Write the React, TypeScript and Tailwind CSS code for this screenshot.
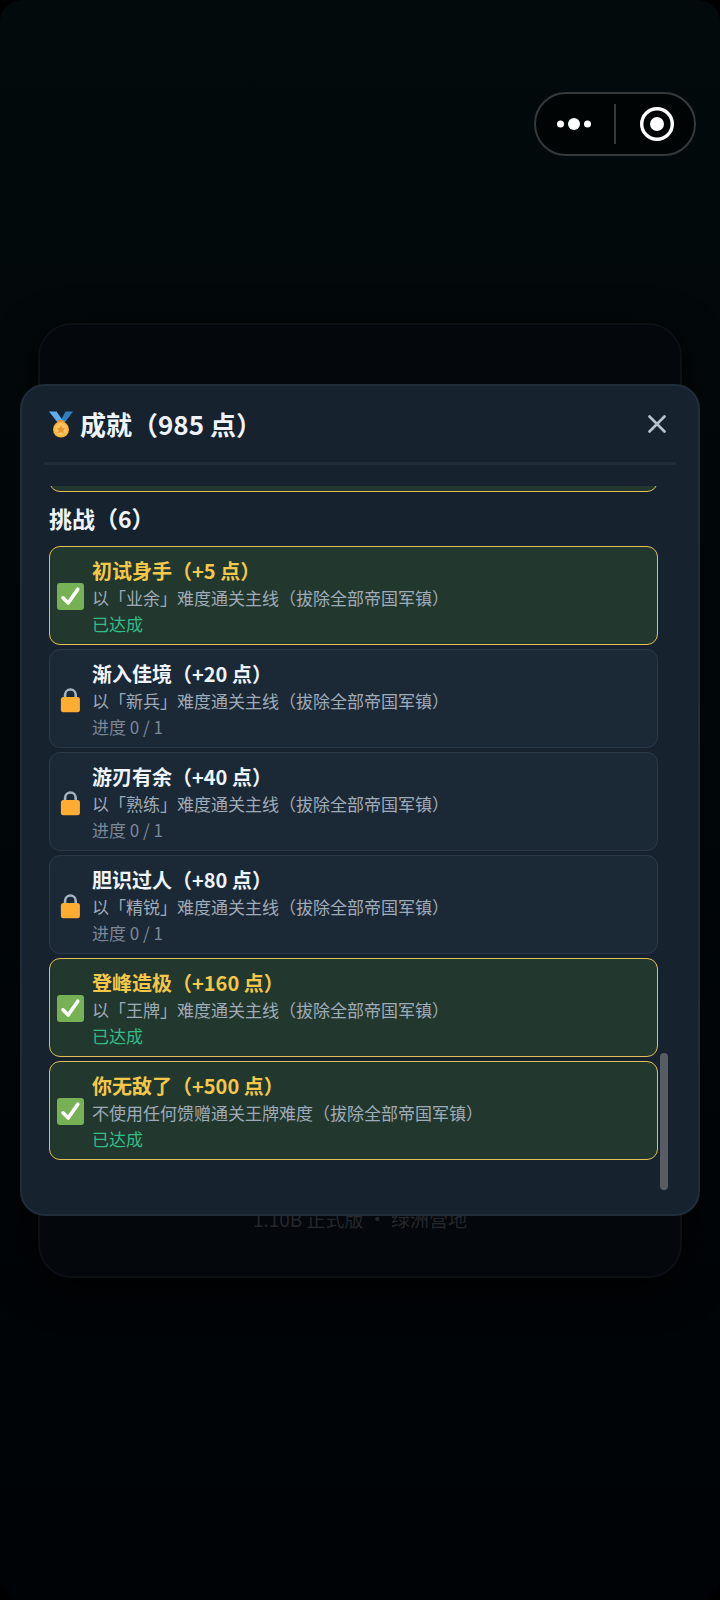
import clsx from 'clsx';

interface Achievement {
  name: string;
  points: number;
  description: string;
  done: boolean;
}

const challenges: Achievement[] = [
  { name: '初试身手', points: 5, description: '以「业余」难度通关主线（拔除全部帝国军镇）', done: true },
  { name: '渐入佳境', points: 20, description: '以「新兵」难度通关主线（拔除全部帝国军镇）', done: false },
  { name: '游刃有余', points: 40, description: '以「熟练」难度通关主线（拔除全部帝国军镇）', done: false },
  { name: '胆识过人', points: 80, description: '以「精锐」难度通关主线（拔除全部帝国军镇）', done: false },
  { name: '登峰造极', points: 160, description: '以「王牌」难度通关主线（拔除全部帝国军镇）', done: true },
  { name: '你无敌了', points: 500, description: '不使用任何馈赠通关王牌难度（拔除全部帝国军镇）', done: true },
];

function MedalIcon() {
  return (
    <svg className="h-7 w-6 shrink-0" viewBox="0 0 24 28" aria-hidden="true">
      <path d="M16.5 1.500H24L15.500 13h-5z" fill="#2f7fc1" />
      <path d="M0 1.500h7.500l8 11.500h-6.500z" fill="#5fadec" />
      <rect x="8.500" y="10" width="7" height="3" rx="1" fill="#d98b35" />
      <circle cx="12" cy="19.500" r="8" fill="#fbb13c" />
      <circle cx="12" cy="19.500" r="6.200" fill="#fcc35c" />
      <path
        d="M12 15.100l1.300 2.800 3 .4-2.200 2.100.6 3-2.700-1.500-2.700 1.500.6-3-2.200-2.100 3-.4z"
        fill="#e8952f"
      />
    </svg>
  );
}

function CheckIcon() {
  return (
    <svg className="size-[27px] shrink-0" viewBox="0 0 27 27" aria-hidden="true">
      <rect width="27" height="27" rx="3" fill="#76b255" />
      <path
        d="M6 14.800l5.200 5.200L20.800 6.200"
        fill="none"
        stroke="#fff"
        strokeWidth="3.600"
        strokeLinecap="round"
        strokeLinejoin="round"
      />
    </svg>
  );
}

function LockIcon() {
  return (
    <svg className="size-[27px] shrink-0" viewBox="0 0 27 27" aria-hidden="true">
      <path
        d="M8.100 13V8.800a5.300 5.300 0 0 1 10.600 0V13"
        fill="none"
        stroke="#a5b2bf"
        strokeWidth="2.600"
      />
      <rect x="3.900" y="11" width="19" height="15.300" rx="2.500" fill="#ffac33" />
    </svg>
  );
}

function AchievementCard({ item }: { item: Achievement }) {
  return (
    <li
      className={clsx(
        'flex items-center gap-2 rounded-[11px] border px-[7px] pt-[10px] pb-2',
        item.done ? 'border-[#e0c158] bg-[#22382f]' : 'border-[#2a3949] bg-[#1b2937]',
      )}
    >
      {item.done ? <CheckIcon /> : <LockIcon />}
      <div>
        <h4
          className={clsx(
            'text-[20px] leading-[28px] font-bold',
            item.done ? 'text-[#f3c84a]' : 'text-[#eff4fb]',
          )}
        >
          {item.name}（+{item.points} 点）
        </h4>
        <p className="text-[17px] leading-[26px] text-[#a0abb8]">{item.description}</p>
        <p className={clsx('text-[17px] leading-[25px]', item.done ? 'text-[#31bd85]' : 'text-[#7b8796]')}>
          {item.done ? '已达成' : '进度 0 / 1'}
        </p>
      </div>
    </li>
  );
}

function MiniProgramCapsule() {
  return (
    <div className="absolute top-[92px] right-6 z-20 flex h-16 w-[162px] items-center rounded-full border-2 border-[#36393a] bg-[#010405]">
      <button type="button" aria-label="更多" className="flex h-full flex-1 items-center justify-center pr-[3px]">
        <svg className="h-4 w-9" viewBox="0 0 36 16" fill="#fff">
          <circle cx="4.500" cy="8" r="3.500" />
          <circle cx="18" cy="8" r="6" />
          <circle cx="31.500" cy="8" r="3.500" />
        </svg>
      </button>
      <span className="h-10 w-[2px] bg-[#36393a]" />
      <button type="button" aria-label="关闭小程序" className="flex h-full flex-1 items-center justify-center pl-[3px]">
        <svg className="size-[34px]" viewBox="0 0 34 34">
          <circle cx="17" cy="17" r="15.300" fill="none" stroke="#fff" strokeWidth="3.400" />
          <circle cx="17" cy="17" r="7" fill="#fff" />
        </svg>
      </button>
    </div>
  );
}

function AchievementDialog() {
  return (
    <section
      role="dialog"
      aria-labelledby="dialog-title"
      className="w-full rounded-[25px] border-2 border-[#202e3b] bg-[#16232f] px-[22px] pb-6"
    >
      <header className="flex h-[79px] items-center justify-between border-b-[3px] border-[#1f2c38] pr-[10px] pl-[5px]">
        <h2 id="dialog-title" className="flex items-center gap-[7px] text-[26px] leading-9 font-bold text-[#eff4fb]">
          <MedalIcon />
          <span>成就（985 点）</span>
        </h2>
        <button type="button" aria-label="关闭" className="text-[#b9c4d0]">
          <svg className="size-[18px]" viewBox="0 0 18 18" fill="none" stroke="currentColor" strokeWidth="2.600" strokeLinecap="round">
            <path d="M1.500 1.500l15 15M16.500 1.500l-15 15" />
          </svg>
        </button>
      </header>

      <div className="mt-[21px] flex gap-[2px] pr-2 pl-[5px]">
        <div className="min-w-0 flex-1 pb-[30px]">
          {/* tail of the previous group, scrolled out of view */}
          <div className="flex h-[6px] items-end overflow-hidden">
            <div className="h-[99px] w-full shrink-0 rounded-[11px] border border-[#e0c158] bg-[#22382f]" />
          </div>
          <h3 className="mt-[10px] mb-3 text-[23px] leading-8 font-bold text-[#eff4fb]">挑战（6）</h3>
          <ul className="flex flex-col gap-1">
            {challenges.map((item) => (
              <AchievementCard key={item.name} item={item} />
            ))}
          </ul>
        </div>
        <div className="flex w-2 flex-col justify-end">
          <div className="h-[137px] rounded-full bg-[#585d64]" />
        </div>
      </div>
    </section>
  );
}

export default function App() {
  return (
    <div className="min-h-screen bg-black font-['Noto_Sans_CJK_SC',sans-serif]">
      <main className="relative grid min-h-screen items-center rounded-[22px] bg-linear-to-b from-[#030a0c] via-[#020709] to-[#000305]">
        <MiniProgramCapsule />

        <div className="col-start-1 row-start-1 mx-[38px] flex min-h-[955px] flex-col justify-end rounded-[34px] border-2 border-[#0b1014] bg-[#04070c] pb-[43px] shadow-[0_10px_40px_#000]">
          <p className="text-center text-[19px] leading-7 text-[#25272b]">1.10B 正式版 · 绿洲营地</p>
        </div>

        <div className="z-10 col-start-1 row-start-1 mx-5">
          <AchievementDialog />
        </div>
      </main>
    </div>
  );
}
